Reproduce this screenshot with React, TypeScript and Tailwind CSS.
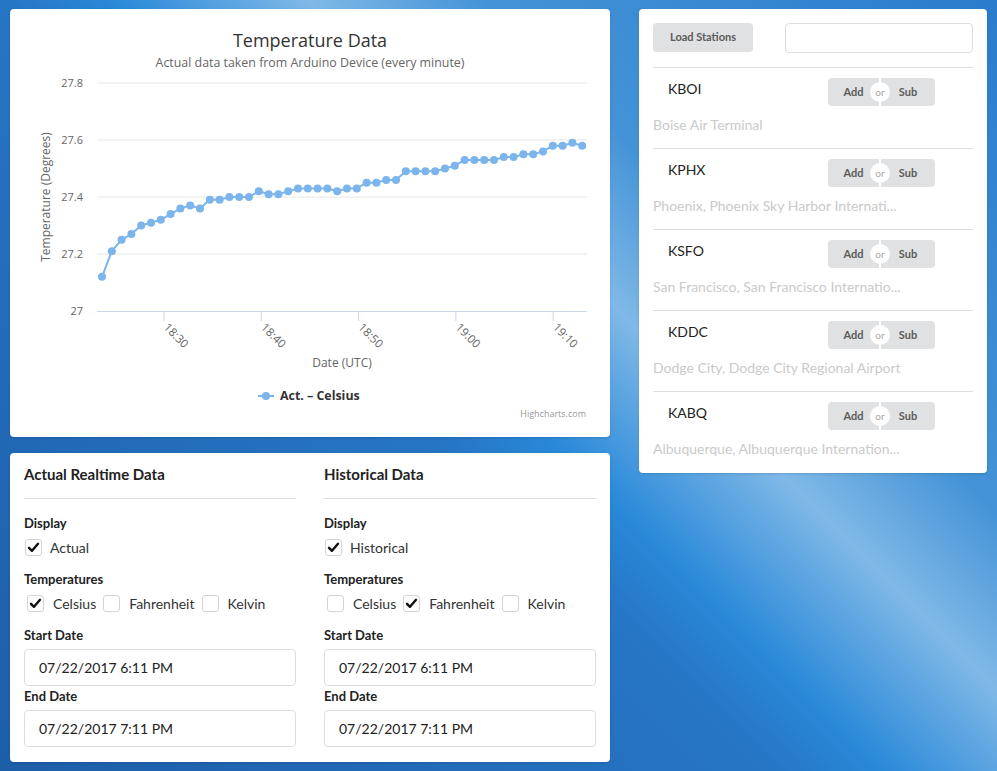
import React from 'react'

const values = [
  27.12, 27.21, 27.25, 27.27, 27.3, 27.31, 27.32, 27.34, 27.36, 27.37,
  27.36, 27.39, 27.39, 27.4, 27.4, 27.4, 27.42, 27.41, 27.41, 27.42,
  27.43, 27.43, 27.43, 27.43, 27.42, 27.43, 27.43, 27.45, 27.45, 27.46,
  27.46, 27.49, 27.49, 27.49, 27.49, 27.5, 27.51, 27.53, 27.53, 27.53,
  27.53, 27.54, 27.54, 27.55, 27.55, 27.56, 27.58, 27.58, 27.59, 27.58,
]

const px = (i: number) => 102 + i * 9.8
const py = (v: number) => 311 - (v - 27) * 285

const stations = [
  { code: 'KBOI', name: 'Boise Air Terminal' },
  { code: 'KPHX', name: 'Phoenix, Phoenix Sky Harbor Internati...' },
  { code: 'KSFO', name: 'San Francisco, San Francisco Internatio...' },
  { code: 'KDDC', name: 'Dodge City, Dodge City Regional Airport' },
  { code: 'KABQ', name: 'Albuquerque, Albuquerque Internation...' },
]

function TemperatureChart() {
  const font = "'Open Sans', 'DejaVu Sans', sans-serif"
  const yTicks = [27, 27.2, 27.4, 27.6, 27.8]
  const xTicks = ['18:30', '18:40', '18:50', '19:00', '19:10']
  const points = values.map((v, i) => `${px(i)},${py(v)}`).join(' ')

  return (
    <svg width="600" height="428" viewBox="10 9 600 428" style={{ fontFamily: font }}>
      <text x="310" y="47" textAnchor="middle" fontSize="18" fill="#333333">
        Temperature Data
      </text>
      <text x="310" y="67" textAnchor="middle" fontSize="12.4" fill="#666666">
        Actual data taken from Arduino Device (every minute)
      </text>

      {yTicks.map((t) => (
        <g key={t}>
          {t !== 27 && <line x1="97" x2="587" y1={py(t)} y2={py(t)} stroke="#e6e6e6" strokeWidth="1" />}
          <text x="83" y={py(t) + 4} textAnchor="end" fontSize="11" fill="#666666">
            {t === 27 ? '27' : t.toFixed(1)}
          </text>
        </g>
      ))}
      <text x="50" y="197" textAnchor="middle" fontSize="12" fill="#666666" transform="rotate(-90 50 197)">
        Temperature (Degrees)
      </text>

      <line x1="97" x2="587" y1="311.5" y2="311.5" stroke="#ccd6eb" strokeWidth="1" />
      {xTicks.map((label, k) => {
        const x = 164 + k * 97.3
        return (
          <g key={label}>
            <line x1={x} x2={x} y1="311" y2="321" stroke="#ccd6eb" strokeWidth="1" />
            <text x={x - 1} y="328" fontSize="11.5" fill="#666666" transform={`rotate(45 ${x - 1} 328)`}>
              {label}
            </text>
          </g>
        )
      })}
      <text x="342" y="367" textAnchor="middle" fontSize="12" fill="#666666">
        Date (UTC)
      </text>

      <polyline points={points} fill="none" stroke="#7cb5ec" strokeWidth="2" strokeLinejoin="round" />
      {values.map((v, i) => (
        <circle key={i} cx={px(i)} cy={py(v)} r="4" fill="#7cb5ec" />
      ))}

      <line x1="258" x2="274" y1="396" y2="396" stroke="#7cb5ec" strokeWidth="2" />
      <circle cx="266" cy="396" r="4" fill="#7cb5ec" />
      <text x="280" y="400" fontSize="12.4" fontWeight="bold" fill="#333333">
        Act. – Celsius
      </text>
      <text x="586" y="417" textAnchor="end" fontSize="9" fill="#999999">
        Highcharts.com
      </text>
    </svg>
  )
}

function CheckBox({ checked }: { checked?: boolean }) {
  return (
    <span className="flex h-[17px] w-[17px] shrink-0 items-center justify-center rounded-[3px] border border-[#d4d4d5] bg-white">
      {checked && (
        <svg width="13" height="13" viewBox="0 0 13 13">
          <path d="M2 6.8 L5 9.8 L11 2.8" fill="none" stroke="#111111" strokeWidth="2.4" strokeLinecap="round" strokeLinejoin="round" />
        </svg>
      )}
    </span>
  )
}

function DataColumn({
  title,
  display,
  temps,
  start,
  end,
}: {
  title: string
  display: string
  temps: boolean[]
  start: string
  end: string
}) {
  const labels = ['Celsius', 'Fahrenheit', 'Kelvin']
  return (
    <div className="flex flex-col">
      <h3 className="text-[15px] font-bold leading-[20px] text-[#222222]">{title}</h3>
      <div className="mt-[14px] border-t border-[#e0e0e0]" />
      <div className="mt-[16px] text-[13px] font-bold leading-[16px] text-[#222222]">Display</div>
      <div className="mt-[7px] flex h-[18px] items-center gap-[8px] pl-[1px]">
        <CheckBox checked />
        <span className="text-[14px] text-[#333333]">{display}</span>
      </div>
      <div className="mt-[15px] text-[13px] font-bold leading-[16px] text-[#222222]">Temperatures</div>
      <div className="mt-[7px] flex h-[18px] items-center pl-[3px]">
        {labels.map((l, i) => (
          <div key={l} className="mr-[7px] flex items-center gap-[9px]">
            <CheckBox checked={temps[i]} />
            <span className="text-[14px] text-[#333333]">{l}</span>
          </div>
        ))}
      </div>
      <div className="mt-[15px] text-[13px] font-bold leading-[16px] text-[#222222]">Start Date</div>
      <div className="mt-[6px] flex h-[37px] items-center rounded-[4px] border border-[#dedede] px-[14px] text-[14px] text-[#222222]">
        {start}
      </div>
      <div className="mt-[2px] text-[13px] font-bold leading-[16px] text-[#222222]">End Date</div>
      <div className="mt-[6px] flex h-[37px] items-center rounded-[4px] border border-[#dedede] px-[14px] text-[14px] text-[#222222]">
        {end}
      </div>
    </div>
  )
}

function StationButtons() {
  return (
    <div className="relative flex h-[28px] w-[107px]">
      <button className="h-full w-[51px] rounded-l-[4px] bg-[#e0e1e2] text-[11px] font-bold text-[#5b5b5b]">Add</button>
      <div className="w-[2px]" />
      <button className="h-full w-[54px] rounded-r-[4px] bg-[#e0e1e2] text-[11px] font-bold text-[#5b5b5b]">Sub</button>
      <span className="absolute left-[42px] top-[4px] flex h-[20px] w-[20px] items-center justify-center rounded-full bg-white text-[10px] leading-none text-[#a8a8a8]">
        or
      </span>
    </div>
  )
}

export default function App() {
  return (
    <div
      className="min-h-screen w-full bg-[linear-gradient(45deg,#1d5ea8_0%,#2571bf_35%,#2676c6_44%,#2a89d9_50%,#80b9e7_61%,#4493d7_71%,#2a7ccc_100%)] pl-[10px] pt-[9px]"
      style={{ fontFamily: "Lato, 'Open Sans', sans-serif" }}
    >
      <div className="flex items-start">
        <div className="flex w-[600px] flex-col gap-[16px]">
          <div className="h-[428px] overflow-hidden rounded-[4px] bg-white shadow-sm">
            <TemperatureChart />
          </div>

          <div className="grid grid-cols-2 gap-[28px] rounded-[4px] bg-white px-[14px] pb-[15px] pt-[11px] shadow-sm">
            <DataColumn
              title="Actual Realtime Data"
              display="Actual"
              temps={[true, false, false]}
              start="07/22/2017 6:11 PM"
              end="07/22/2017 7:11 PM"
            />
            <DataColumn
              title="Historical Data"
              display="Historical"
              temps={[false, true, false]}
              start="07/22/2017 6:11 PM"
              end="07/22/2017 7:11 PM"
            />
          </div>
        </div>

        <div className="ml-[29px] w-[348px] rounded-[4px] bg-white px-[14px] pb-[1px] pt-[14px] shadow-sm">
          <div className="mb-[14px] flex items-start justify-between">
            <button className="h-[29px] w-[100px] rounded-[4px] bg-[#e0e1e2] text-[11px] font-bold text-[#5b5b5b]">
              Load Stations
            </button>
            <input className="h-[30px] w-[188px] rounded-[4px] border border-[#dedede] bg-white px-3 outline-none" />
          </div>
          {stations.map((s) => (
            <div key={s.code} className="border-t border-[#dedede] pb-[14px] pt-[10px]">
              <div className="flex items-start">
                <div className="w-[175px] pl-[15px] pt-[1px] text-[14px] leading-[20px] text-[#222222]">{s.code}</div>
                <StationButtons />
              </div>
              <div className="mt-[10px] whitespace-nowrap text-[14px] leading-[18px] text-[#cacaca]">{s.name}</div>
            </div>
          ))}
        </div>
      </div>
    </div>
  )
}
